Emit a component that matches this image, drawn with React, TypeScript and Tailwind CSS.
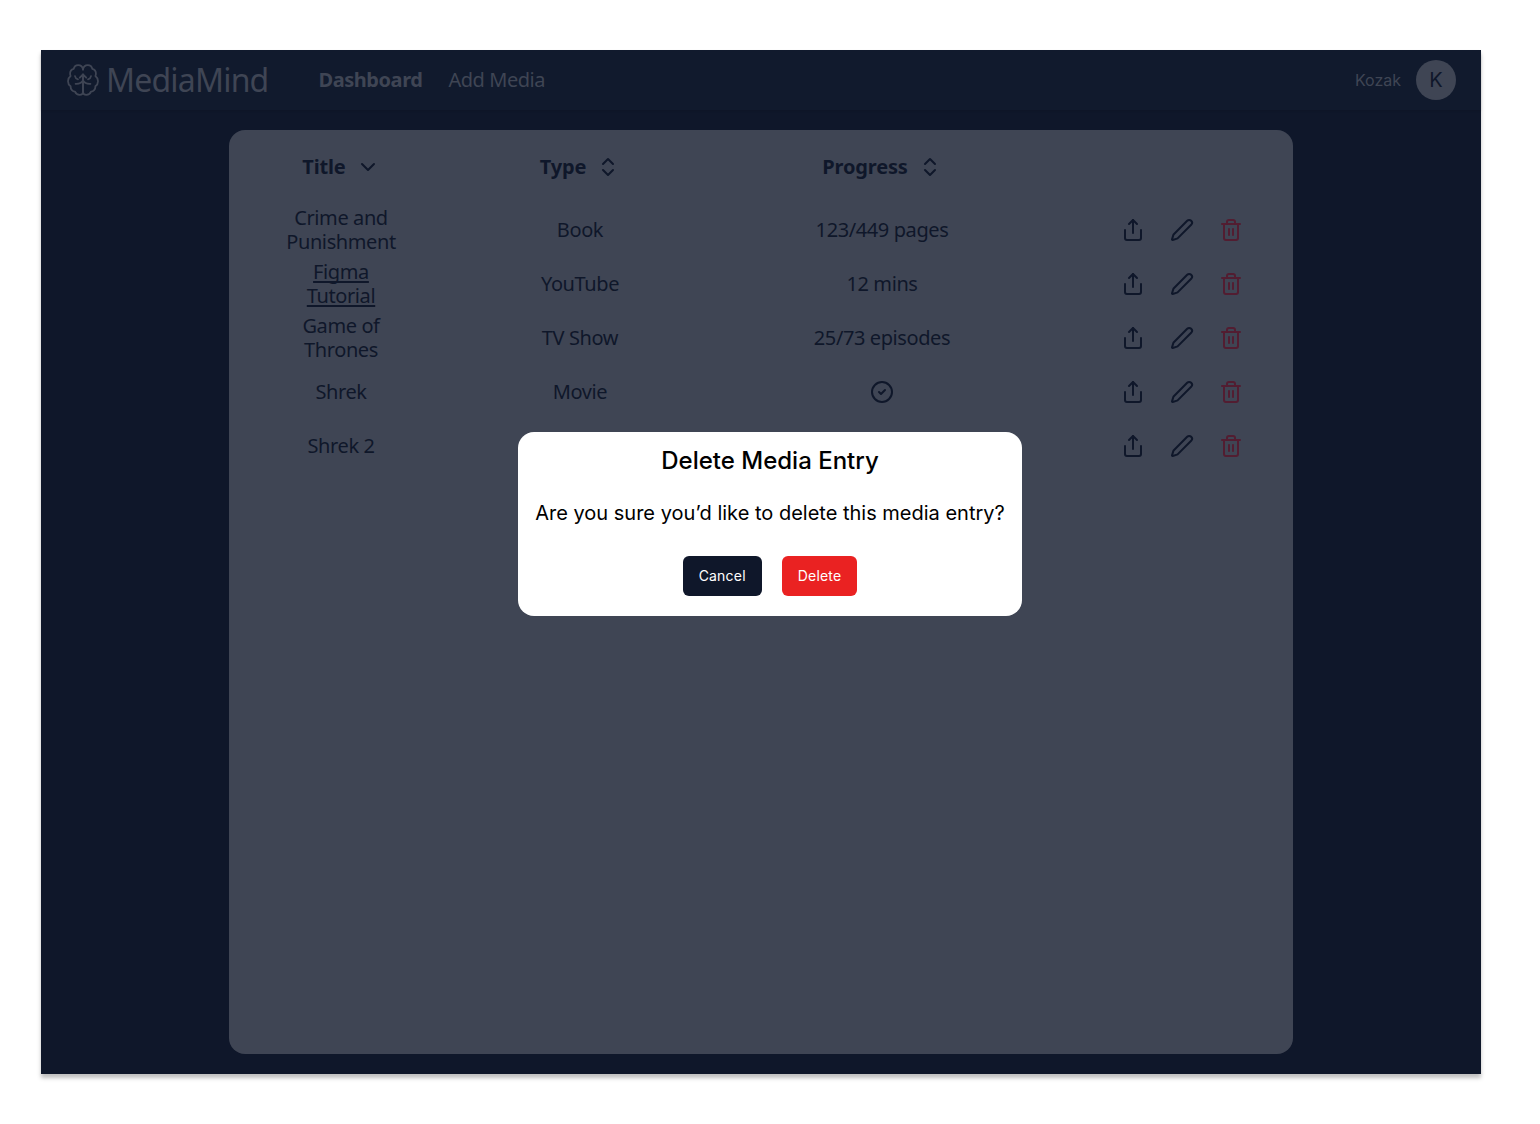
import { ChevronDown, ChevronsUpDown, CircleCheck, Pen, Share, Trash2 } from "lucide-react"

const rows = [
  { title: ["Crime and", "Punishment"], type: "Book", progress: "123/449 pages" },
  { title: ["Figma", "Tutorial"], type: "YouTube", progress: "12 mins", link: true },
  { title: ["Game of", "Thrones"], type: "TV Show", progress: "25/73 episodes" },
  { title: ["Shrek"], type: "Movie", done: true },
  { title: ["Shrek 2"], type: "Movie", done: true },
]

// half of the logo, mirrored for the right lobe
const lobe =
  "M16 5.5C15.6 3 13.6 1.2 11.2 1.2C9 1.2 7.2 2.7 6.7 4.8C4.4 5.4 3 7.4 3.1 9.8C3.1 10.6 3.3 11.3 3.6 12C2 13.2 1 15.1 1 17.2C1 19.3 2 21.1 3.6 22.3C3.4 25.4 5.7 27.5 8 27.6C8.8 29.6 10.6 30.8 12.6 30.8C14.6 30.8 16 29.4 16 27.4"
const branch = "M16 10.5L16 27.4M16 10.5L12.8 13.7M16 16.5C14.5 19 11.8 20 8.6 19.8M8 12.2C8.3 13.8 9.4 15 11 15.4"

function Logo() {
  return (
    <svg viewBox="0 0 32 32" className="h-[32px] w-[32px]" fill="none" stroke="currentColor" strokeWidth={1.8} strokeLinecap="round" strokeLinejoin="round">
      <path d={lobe} />
      <path d={branch} />
      <g transform="translate(32 0) scale(-1 1)">
        <path d={lobe} />
        <path d={branch} />
      </g>
    </svg>
  )
}

export default function App() {
  return (
    <div className="min-h-[1124px] bg-white pt-[50px] pl-[41px] font-['Noto_Sans',sans-serif]">
      <div className="relative flex h-[1024px] w-[1440px] flex-col bg-[#0f172a] shadow-[0_4px_4px_rgba(0,0,0,0.25)]">
        <nav className="flex h-[60px] items-center justify-between bg-[#111a2d] pr-[25px] pl-[26px] text-[#3f4554] shadow-[0_1px_2px_rgba(0,0,0,0.1)]">
          <div className="flex items-center">
            <Logo />
            <span className="ml-[7px] text-[32px] leading-none tracking-[-0.8px]">MediaMind</span>
            <span className="ml-[50px] text-[20px] font-bold tracking-[-0.45px]">Dashboard</span>
            <span className="ml-[26px] text-[20px] tracking-[-0.45px]">Add Media</span>
          </div>
          <div className="flex items-center gap-[15px] font-['Inter',sans-serif]">
            <span className="text-[16px]">Kozak</span>
            <div className="flex h-[40px] w-[40px] items-center justify-center rounded-full bg-[#3f4554] text-[20px] text-[#0f172a]">
              K
            </div>
          </div>
        </nav>

        <main className="mx-auto mt-[20px] h-[924px] w-[1064px] rounded-[16px] bg-[#3f4554] text-[20px] tracking-[-0.4px] text-[#0f172a]">
          <div className="grid h-[73px] grid-cols-[112px_366px_238px_1fr] items-center pl-[56px] font-bold tracking-[-0.15px]">
            <div className="flex items-center justify-center gap-[10px] whitespace-nowrap">
              Title <ChevronDown className="h-[24px] w-[24px]" strokeWidth={2} />
            </div>
            <div className="flex items-center justify-center gap-[10px]">
              Type <ChevronsUpDown className="h-[24px] w-[24px]" strokeWidth={2} />
            </div>
            <div className="flex items-center justify-center gap-[10px]">
              Progress <ChevronsUpDown className="h-[24px] w-[24px]" strokeWidth={2} />
            </div>
          </div>
          {rows.map((row) => (
            <div
              key={row.title.join(" ")}
              className="grid h-[54px] grid-cols-[112px_366px_238px_1fr] items-center pl-[56px] text-center leading-[24px]"
            >
              <div className={row.link ? "underline decoration-[1.5px] underline-offset-2 [text-decoration-skip-ink:none]" : ""}>
                {row.title.map((line) => (
                  <div key={line}>{line}</div>
                ))}
              </div>
              <div>{row.type}</div>
              <div className="flex justify-center">
                {row.done ? <CircleCheck className="h-[24px] w-[24px]" strokeWidth={2} /> : row.progress}
              </div>
              <div className="flex items-center gap-[25px] pl-[120px]">
                <Share className="h-[24px] w-[24px]" strokeWidth={2} />
                <Pen className="h-[24px] w-[24px]" strokeWidth={2} />
                <Trash2 className="h-[24px] w-[24px] text-[#521d31]" strokeWidth={2} />
              </div>
            </div>
          ))}
        </main>

        <div className="absolute top-[382px] left-[477px] flex h-[184px] w-[504px] flex-col items-center rounded-[16px] bg-white font-['Inter',sans-serif] text-black">
          <h2 className="mt-[13px] text-[24px] leading-[32px] font-medium">Delete Media Entry</h2>
          <p className="mt-[22px] text-[20px] leading-[28px]">Are you sure you’d like to delete this media entry?</p>
          <div className="mt-[29px] flex gap-[20px] text-[14px] tracking-[0.2px] text-white">
            <button className="h-[40px] rounded-[6px] bg-[#0f172a] px-[16px] pb-[1px]">Cancel</button>
            <button className="h-[40px] rounded-[6px] bg-[#ea2222] px-[16px] pb-[1px]">Delete</button>
          </div>
        </div>
      </div>
    </div>
  )
}
